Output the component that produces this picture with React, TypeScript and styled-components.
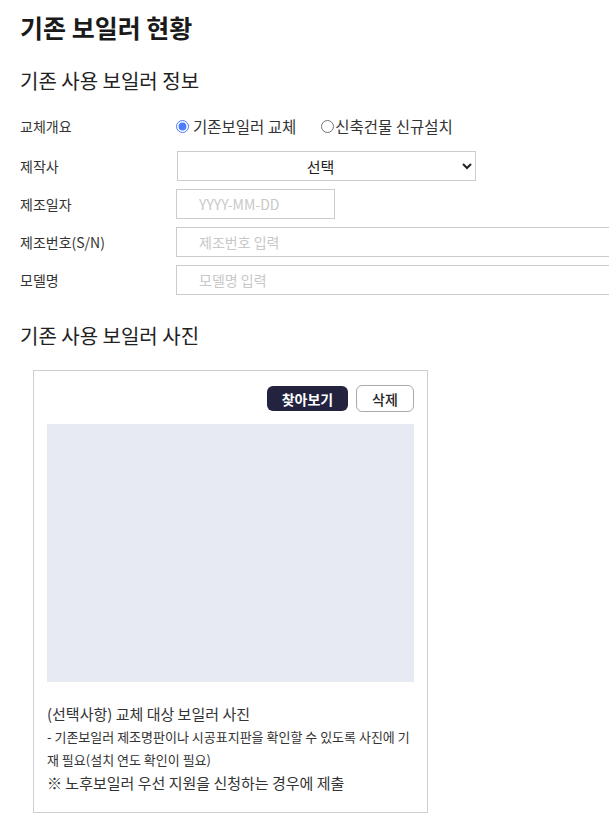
import styled, { createGlobalStyle } from "styled-components";

const GlobalStyle = createGlobalStyle`
  html, body {
    margin: 0;
    padding: 0;
    background: #fff;
  }
  body {
    font-family: "Noto Sans CJK KR", "Noto Sans", sans-serif;
    color: #222;
    overflow: hidden;
  }
`;

const Page = styled.div`
  width: 609px;
  padding: 8px 0 0 20px;
  box-sizing: border-box;
`;

const Title = styled.h1`
  margin: 0;
  font-size: 25px;
  font-weight: 700;
  line-height: 38px;
  color: #1a1a1a;
`;

const SectionTitle = styled.h2<{ top: number }>`
  margin: ${(p) => p.top}px 0 0 0;
  font-size: 20px;
  font-weight: 400;
  line-height: 30px;
  color: #222;
`;

const Form = styled.div`
  display: flex;
  flex-direction: column;
  gap: 8px;
  margin-top: 15px;
`;

const Row = styled.div<{ extra?: number }>`
  display: grid;
  grid-template-columns: 156px 1fr;
  align-items: center;
  height: 30px;
  margin-bottom: ${(p) => p.extra ?? 0}px;
`;

const Label = styled.span`
  font-size: 14px;
  color: #333;
`;

const RadioGroup = styled.div`
  display: flex;
  align-items: center;
  font-size: 15.5px;
  color: #333;
`;

const RadioLabel = styled.label<{ gap: number; space: number }>`
  display: flex;
  align-items: center;
  margin-right: ${(p) => p.gap}px;
  input {
    margin: 0 ${(p) => p.space}px 0 0;
    width: 13px;
    height: 13px;
    accent-color: #4d7cfe;
  }
`;

const Select = styled.select`
  width: 299px;
  height: 30px;
  margin-left: 1px;
  border: 1px solid #ccc;
  background: #fff;
  font-family: inherit;
  font-size: 15px;
  color: #222;
  text-align: center;
  text-align-last: center;
  padding: 0 8px;
  outline: none;
`;

const TextInput = styled.input<{ w: number }>`
  width: ${(p) => p.w}px;
  height: 30px;
  box-sizing: border-box;
  border: 1px solid #ccc;
  padding: 0 22px;
  font-family: inherit;
  font-size: 14px;
  color: #333;
  outline: none;
  &::placeholder {
    color: #c8c8c8;
  }
`;

const PhotoBox = styled.div`
  width: 395px;
  margin: 19px 0 0 13px;
  box-sizing: border-box;
  border: 1px solid #cfcfcf;
  padding: 14px 13px 18px;
`;

const Buttons = styled.div`
  display: flex;
  justify-content: flex-end;
  align-items: center;
  gap: 8px;
`;

const Button = styled.button<{ dark?: boolean }>`
  height: ${(p) => (p.dark ? 25 : 27)}px;
  padding: 0;
  width: ${(p) => (p.dark ? 81 : 58)}px;
  border-radius: 6px;
  border: ${(p) => (p.dark ? "none" : "1px solid #aaa")};
  background: ${(p) => (p.dark ? "#23233f" : "#fff")};
  color: ${(p) => (p.dark ? "#fff" : "#222")};
  font-family: inherit;
  font-size: 14px;
  font-weight: ${(p) => (p.dark ? 700 : 500)};
  line-height: 1;
`;

const Preview = styled.div`
  margin-top: 12px;
  height: 258px;
  background: #e7eaf3;
`;

const Notes = styled.div`
  margin-top: 20px;
  color: #333;
`;

const Note = styled.p<{ size: number }>`
  margin: 0;
  font-size: ${(p) => p.size}px;
  line-height: 23px;
`;

export default function App() {
  return (
    <>
      <GlobalStyle />
      <Page>
        <Title>기존 보일러 현황</Title>
        <SectionTitle top={20}>기존 사용 보일러 정보</SectionTitle>
        <Form>
          <Row extra={2}>
            <Label>교체개요</Label>
            <RadioGroup>
              <RadioLabel gap={25} space={4}>
                <input type="radio" name="kind" defaultChecked />
                기존보일러 교체
              </RadioLabel>
              <RadioLabel gap={0} space={1}>
                <input type="radio" name="kind" />
                신축건물 신규설치
              </RadioLabel>
            </RadioGroup>
          </Row>
          <Row>
            <Label>제작사</Label>
            <Select defaultValue="">
              <option value="">선택</option>
            </Select>
          </Row>
          <Row>
            <Label>제조일자</Label>
            <TextInput w={159} placeholder="YYYY-MM-DD" />
          </Row>
          <Row>
            <Label>제조번호(S/N)</Label>
            <TextInput w={460} placeholder="제조번호 입력" />
          </Row>
          <Row>
            <Label>모델명</Label>
            <TextInput w={460} placeholder="모델명 입력" />
          </Row>
        </Form>
        <SectionTitle top={26}>기존 사용 보일러 사진</SectionTitle>
        <PhotoBox>
          <Buttons>
            <Button dark>찾아보기</Button>
            <Button>삭제</Button>
          </Buttons>
          <Preview />
          <Notes>
            <Note size={15}>(선택사항) 교체 대상 보일러 사진</Note>
            <Note size={13}>
              - 기존보일러 제조명판이나 시공표지판을 확인할 수 있도록 사진에 기재 필요(설치 연도 확인이 필요)
            </Note>
            <Note size={15}>※ 노후보일러 우선 지원을 신청하는 경우에 제출</Note>
          </Notes>
        </PhotoBox>
      </Page>
    </>
  );
}
